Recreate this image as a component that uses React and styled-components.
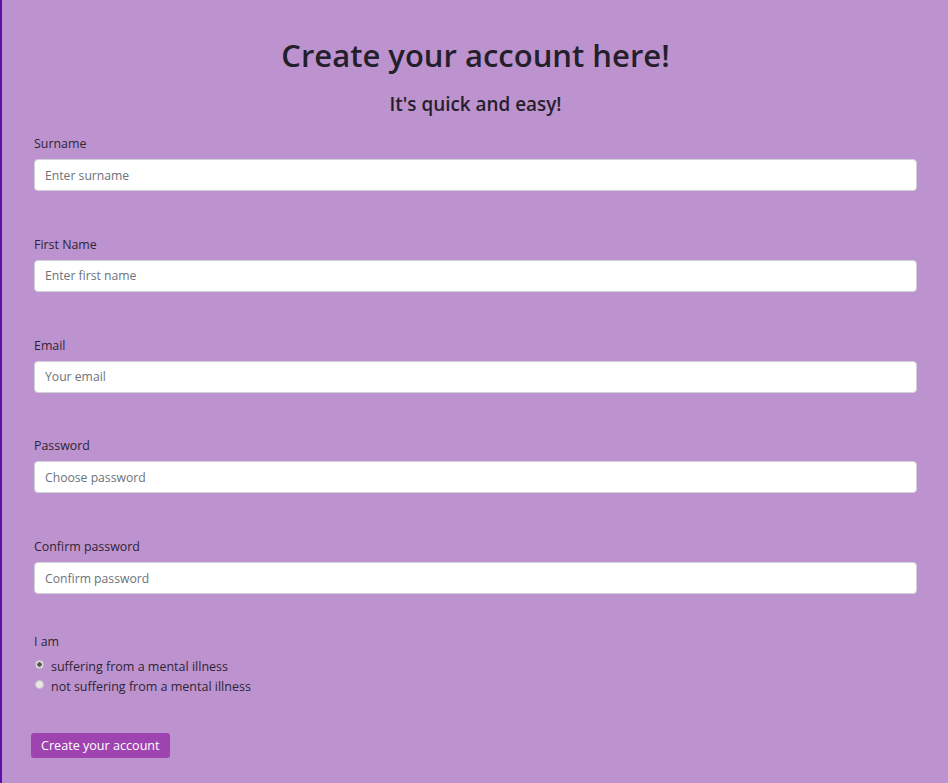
import styled, { createGlobalStyle } from "styled-components";

const GlobalStyle = createGlobalStyle`
    html, body {
        margin: 0;
        padding: 0;
        background: #bd93cf;
    }
    * {
        box-sizing: border-box;
    }
`;

const fields = [
    { label: "Surname", placeholder: "Enter surname", type: "text" },
    { label: "First Name", placeholder: "Enter first name", type: "text" },
    { label: "Email", placeholder: "Your email", type: "email" },
    { label: "Password", placeholder: "Choose password", type: "password" },
    { label: "Confirm password", placeholder: "Confirm password", type: "password" }
];

function App() {
    return (
        <>
            <GlobalStyle />
            <PageWrapper>
                <Title>Create your account here!</Title>
                <Subtitle>It's quick and easy!</Subtitle>
                <Form onSubmit={(e) => e.preventDefault()}>
                    {fields.map((f) => (
                        <FieldGroup key={f.label}>
                            <Label>{f.label}</Label>
                            <StyledInput type={f.type} placeholder={f.placeholder} />
                        </FieldGroup>
                    ))}
                    <RadioGroup>
                        <Label>I am</Label>
                        <RadioRow>
                            <Radio type="radio" name="status" defaultChecked />
                            suffering from a mental illness
                        </RadioRow>
                        <RadioRow>
                            <Radio type="radio" name="status" />
                            not suffering from a mental illness
                        </RadioRow>
                    </RadioGroup>
                    <StyledButton type="submit">Create your account</StyledButton>
                </Form>
            </PageWrapper>
        </>
    );
}

const PageWrapper = styled.div`
    min-height: 783px;
    border-left: 2px solid #5a10aa;
    background: #bd93cf;
    padding: 32px 31px 20px 32px;
    font-family: "Open Sans", "Noto Sans", sans-serif;
    color: #2b2333;
`;

const Title = styled.h1`
    margin: 0;
    text-align: center;
    font-size: 31px;
    font-weight: 600;
    line-height: 46px;
    color: #241f2a;
`;

const Subtitle = styled.h5`
    margin: 13px 0 18px;
    text-align: center;
    font-size: 18.9px;
    font-weight: 600;
    line-height: 26px;
    color: #241f2a;
`;

const Form = styled.form`
    display: flex;
    flex-direction: column;
`;

const FieldGroup = styled.div`
    display: flex;
    flex-direction: column;
    margin-bottom: 44.75px;
`;

const Label = styled.label`
    font-size: 12.4px;
    line-height: 18px;
    margin-bottom: 6px;
    color: #2d2535;
`;

const StyledInput = styled.input`
    width: 100%;
    height: 32px;
    padding: 0 10px;
    font-family: inherit;
    font-size: 12.2px;
    border: 1px solid #cfd3d8;
    border-radius: 4px;
    background: #fff;
    color: #495057;
    &::placeholder {
        color: #6c737b;
    }
`;

const RadioGroup = styled.div`
    display: flex;
    flex-direction: column;
    margin-top: -6px;
`;

const RadioRow = styled.label`
    display: flex;
    align-items: center;
    font-size: 12.5px;
    line-height: 20px;
    color: #2d2535;
`;

const Radio = styled.input`
    appearance: none;
    margin: 0 7px 0 1px;
    width: 9px;
    height: 9px;
    border-radius: 50%;
    border: 1px solid #c4c4c4;
    background: #e6e6e6;
    position: relative;
    top: -2px;
    &:checked {
        background: radial-gradient(circle, #555 0 2px, #e6e6e6 2.5px);
    }
`;

const StyledButton = styled.button`
    align-self: flex-start;
    margin: 36px 0 0 -3px;
    padding: 0 10px;
    height: 25px;
    border: none;
    border-radius: 3px;
    background: #9e43b0;
    color: #fff;
    font-family: inherit;
    font-size: 12.6px;
    cursor: pointer;
`;

export default App;
